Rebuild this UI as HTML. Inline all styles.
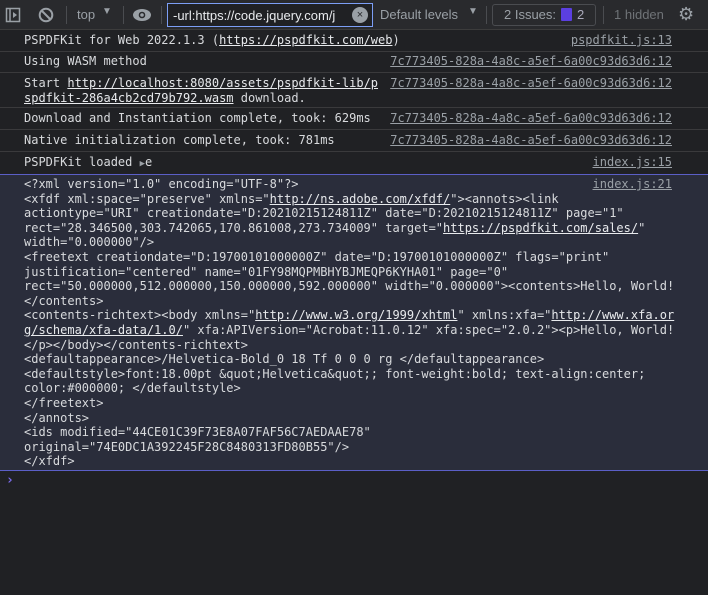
<!DOCTYPE html>
<html><head><meta charset="utf-8"><style>
*{margin:0;padding:0;box-sizing:border-box}
body{width:708px;height:595px;background:#202124;overflow:hidden;position:relative;font-family:"DejaVu Sans Mono","Liberation Mono",monospace;font-size:12px;color:#d8dadd}
.tb{position:absolute;left:0;top:0;width:708px;height:30px;background:#292a2d;border-bottom:1px solid #3c3c3c;font-family:"Liberation Sans",sans-serif;font-size:13px;color:#9aa0a6}
.tb>*{position:absolute}
.sep{width:1px;height:18px;top:6px;background:#4a4c50}
.row{position:absolute;left:0;width:708px;border-bottom:1px solid #3a3a3c}
.t{position:absolute;left:24px;line-height:14.6px;white-space:pre}
.src{position:absolute;right:36px;color:#9aa0a6;text-decoration:underline;line-height:14.6px;white-space:pre}
u{color:#e8eaed}
</style></head><body>
<div class="tb">
<svg style="left:5px;top:7px" width="16" height="16"><rect x="1.5" y="1.5" width="13" height="13" fill="none" stroke="#9aa0a6" stroke-width="1.5"/><line x1="5" y1="2" x2="5" y2="14" stroke="#9aa0a6" stroke-width="1.5"/><path d="M8 5l4 3-4 3z" fill="#9aa0a6"/></svg>
<svg style="left:38px;top:7px" width="16" height="16"><circle cx="8" cy="8" r="6.3" fill="none" stroke="#9aa0a6" stroke-width="2"/><line x1="3.5" y1="3.5" x2="12.5" y2="12.5" stroke="#9aa0a6" stroke-width="2"/></svg>
<div class="sep" style="left:66px"></div>
<div style="left:77px;top:7px">top</div>
<div style="left:102px;top:6px;font-size:10px">▼</div>
<div class="sep" style="left:123px"></div>
<svg style="left:132px;top:7px" width="20" height="16"><ellipse cx="10" cy="8" rx="9" ry="6" fill="#9aa0a6"/><circle cx="10" cy="8" r="3.3" fill="#292a2d"/><circle cx="10" cy="8" r="1.8" fill="#9aa0a6"/></svg>
<div class="sep" style="left:161px"></div>
<div style="left:167px;top:3px;width:206px;height:24px;border:1px solid #7c9ef5;background:#202124;color:#e8eaed;overflow:hidden;white-space:nowrap;padding:4px 0 0 5px;font-size:13px">-url:https://code.jquery.com/j</div>
<div style="left:352px;top:7px;width:16px;height:16px;border-radius:50%;background:#9aa0a6;color:#292a2d;font-size:11px;line-height:16px;text-align:center">×</div>
<div style="left:380px;top:7px">Default levels</div>
<div style="left:468px;top:6px;font-size:10px">▼</div>
<div class="sep" style="left:486px"></div>
<div style="left:492px;top:4px;width:104px;height:22px;border:1px solid #4a4c50;border-radius:3px"></div>
<div style="left:504px;top:7px">2 Issues:</div>
<div style="left:561px;top:8px;width:11px;height:13px;background:#5b3fe0;border-radius:1px"></div>
<div style="left:577px;top:7px;color:#aab">2</div>
<div class="sep" style="left:603px"></div>
<div style="left:614px;top:7px;color:#6f7377">1 hidden</div>
<div style="left:678px;top:4px;font-size:18px;color:#9aa0a6">⚙</div>
</div>

<div class="row" style="top:31px;height:21px"><div class="t" style="top:2px">PSPDFKit for Web 2022.1.3 (<u>https://pspdfkit.com/web</u>)</div><div class="src" style="top:2px">pspdfkit.js:13</div></div>
<div class="row" style="top:52px;height:21px"><div class="t" style="top:2px">Using WASM method</div><div class="src" style="top:2px">7c773405-828a-4a8c-a5ef-6a00c93d63d6:12</div></div>
<div class="row" style="top:73px;height:35px"><div class="t" style="top:3px">Start <u>http://localhost:8080/assets/pspdfkit-lib/p</u>
<u>spdfkit-286a4cb2cd79b792.wasm</u> download.</div><div class="src" style="top:3px">7c773405-828a-4a8c-a5ef-6a00c93d63d6:12</div></div>
<div class="row" style="top:108px;height:22px"><div class="t" style="top:3px">Download and Instantiation complete, took: 629ms</div><div class="src" style="top:3px">7c773405-828a-4a8c-a5ef-6a00c93d63d6:12</div></div>
<div class="row" style="top:130px;height:22px"><div class="t" style="top:3px">Native initialization complete, took: 781ms</div><div class="src" style="top:3px">7c773405-828a-4a8c-a5ef-6a00c93d63d6:12</div></div>
<div class="row" style="top:152px;height:23px;border-bottom:1px solid #5b5fc7"><div class="t" style="top:3px">PSPDFKit loaded <span style="font-size:9px;color:#9aa0a6">▶</span>e</div><div class="src" style="top:3px">index.js:15</div></div>
<div class="row" style="top:175px;height:296px;background:#2a2d3b;border-bottom:1px solid #5b5fc7"><div class="t" style="top:2px">&lt;?xml version="1.0" encoding="UTF-8"?&gt;
&lt;xfdf xml:space="preserve" xmlns="<u>http://ns.adobe.com/xfdf/</u>"&gt;&lt;annots&gt;&lt;link
actiontype="URI" creationdate="D:20210215124811Z" date="D:20210215124811Z" page="1"
rect="28.346500,303.742065,170.861008,273.734009" target="<u>https://pspdfkit.com/sales/</u>"
width="0.000000"/&gt;
&lt;freetext creationdate="D:19700101000000Z" date="D:19700101000000Z" flags="print"
justification="centered" name="01FY98MQPMBHYBJMEQP6KYHA01" page="0"
rect="50.000000,512.000000,150.000000,592.000000" width="0.000000"&gt;&lt;contents&gt;Hello, World!
&lt;/contents&gt;
&lt;contents-richtext&gt;&lt;body xmlns="<u>http://www.w3.org/1999/xhtml</u>" xmlns:xfa="<u>http://www.xfa.or</u>
<u>g/schema/xfa-data/1.0/</u>" xfa:APIVersion="Acrobat:11.0.12" xfa:spec="2.0.2"&gt;&lt;p&gt;Hello, World!
&lt;/p&gt;&lt;/body&gt;&lt;/contents-richtext&gt;
&lt;defaultappearance&gt;/Helvetica-Bold_0 18 Tf 0 0 0 rg &lt;/defaultappearance&gt;
&lt;defaultstyle&gt;font:18.00pt &amp;quot;Helvetica&amp;quot;; font-weight:bold; text-align:center;
color:#000000; &lt;/defaultstyle&gt;
&lt;/freetext&gt;
&lt;/annots&gt;
&lt;ids modified="44CE01C39F73E8A07FAF56C7AEDAAE78"
original="74E0DC1A392245F28C8480313FD80B55"/&gt;
&lt;/xfdf&gt;</div><div class="src" style="top:2px">index.js:21</div></div>
<div style="position:absolute;left:6px;top:473px;color:#7c6cf0;font-size:13px;font-weight:bold">›</div>
</body></html>
